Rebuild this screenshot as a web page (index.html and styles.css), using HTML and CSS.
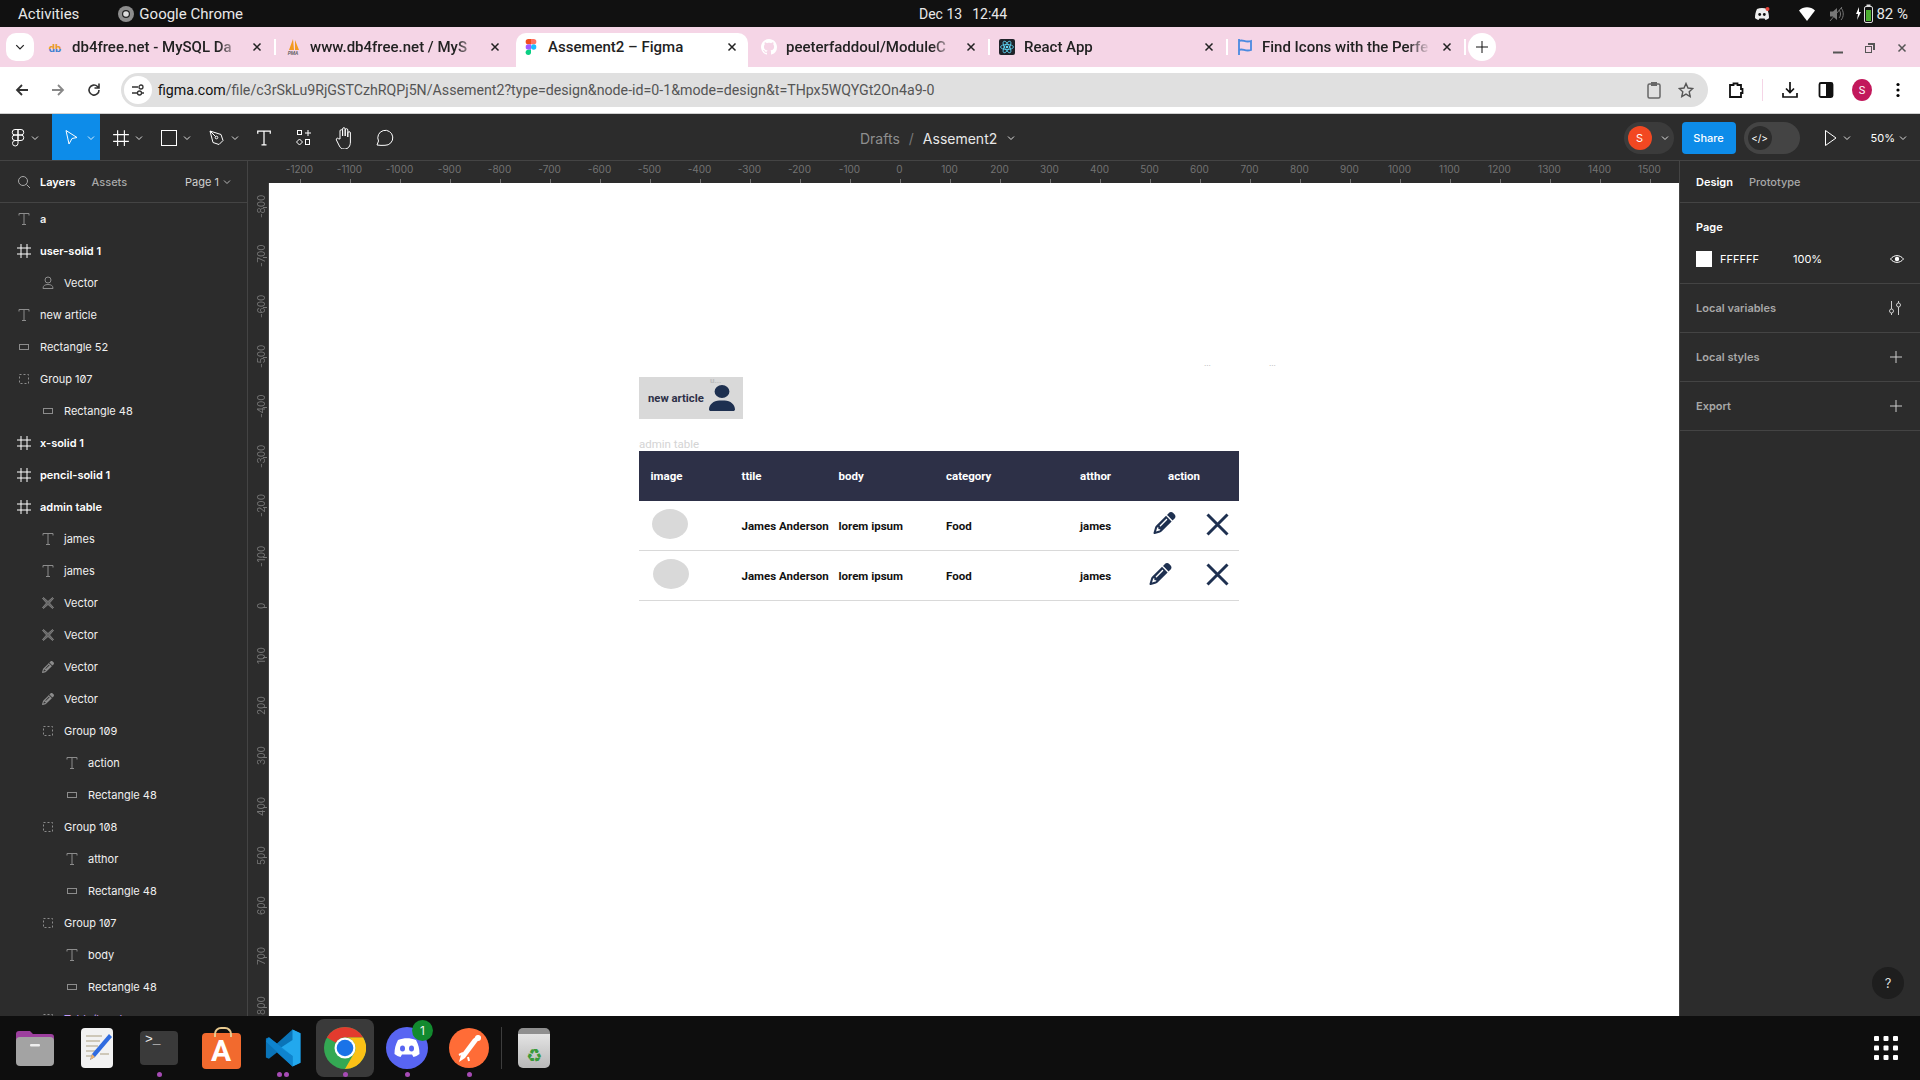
FILE: index.html
```html
<!DOCTYPE html>
<html lang="en">
<head>
    <meta charset="UTF-8">
    <title>Assement2 – Figma</title>
    <link rel="stylesheet" href="styles.css">
</head>
<body>
    <svg class="sprite" xmlns="http://www.w3.org/2000/svg">
        <linearGradient id="db-grad" x1="0" y1="0" x2="0" y2="1"><stop offset=".5" stop-color="#e79a2c"/><stop offset=".5" stop-color="#3f7fd0"/></linearGradient>
        <symbol id="i-text" viewBox="0 0 16 16"><path d="M3 4.500V2.500h10v2M8 2.500v11M6 13.500h4" fill="none" stroke="currentColor"/></symbol>
        <symbol id="i-frame" viewBox="0 0 16 16"><path d="M5 1v14M11 1v14M1 5h14M1 11h14" fill="none" stroke="currentColor"/></symbol>
        <symbol id="i-rect" viewBox="0 0 16 16"><rect x="3.500" y="5.500" width="9" height="5" fill="none" stroke="currentColor"/></symbol>
        <symbol id="i-group" viewBox="0 0 16 16"><rect x="3.500" y="3.500" width="9" height="9" fill="none" stroke="currentColor" stroke-dasharray="2 2"/></symbol>
        <symbol id="i-user" viewBox="0 0 16 16"><circle cx="8" cy="5" r="3" fill="none" stroke="currentColor"/><path d="M3 13.500c0-3 2-4 5-4s5 1 5 4z" fill="none" stroke="currentColor"/></symbol>
        <symbol id="i-x" viewBox="0 0 16 16"><path d="M3.500 2.500L8 6.500l4.500-4 1 1-4 4.500 4 4.500-1 1-4.500-4-4.500 4-1-1 4-4.500-4-4.500z" fill="#666" stroke="currentColor" stroke-width=".8"/></symbol>
        <symbol id="i-pencil" viewBox="0 0 512 512"><path fill="currentColor" d="M410.300 231l11.300-11.300-33.900-33.900-62.100-62.100L291.700 89.800l-11.300 11.300-22.600 22.600L58.600 322.900c-10.400 10.400-18 23.300-22.200 37.400L1 480.700c-2.500 8.400-.2 17.500 6.100 23.700s15.300 8.500 23.700 6.100l120.300-35.400c14.100-4.200 27-11.800 37.400-22.200L387.700 253.700 410.300 231zM160 399.400l-9.100 22.700c-4 3.100-8.500 5.400-13.300 6.900L59.400 452l23-78.100c1.400-4.900 3.800-9.400 6.900-13.300l22.700-9.100v32c0 8.800 7.200 16 16 16h32zM362.700 18.700L348.300 33.200 325.700 55.800 314.300 67.100l33.900 33.900 62.100 62.100 33.900 33.900 11.300-11.300 22.600-22.600 14.500-14.500c25-25 25-65.500 0-90.500L453.300 18.700c-25-25-65.500-25-90.500 0zm-47.400 168l-144 144c-6.200 6.200-16.400 6.200-22.600 0s-6.200-16.400 0-22.600l144-144c6.200-6.200 16.400-6.200 22.600 0s6.200 16.400 0 22.600z"/></symbol>
        <symbol id="i-chev" viewBox="0 0 8 8"><path d="M1 2.500l3 3 3-3" fill="none" stroke="currentColor"/></symbol>
        <symbol id="i-close" viewBox="0 0 12 12"><path d="M2.500 2.500l7 7M9.500 2.500l-7 7" stroke="currentColor" stroke-width="1.500"/></symbol>
        <symbol id="i-plus" viewBox="0 0 12 12"><path d="M6 0v12M0 6h12" stroke="currentColor"/></symbol>
    </svg>

    <!-- ubuntu top bar -->
    <header class="sysbar">
        <div class="sys-left">
            <span>Activities</span>
            <span class="sys-app">
                <svg width="16" height="16" viewBox="0 0 16 16"><circle cx="8" cy="8" r="8" fill="#8d8d8d"/><circle cx="8" cy="8" r="4" fill="#222"/><circle cx="8" cy="8" r="2.800" fill="#ddd"/></svg>
                Google Chrome
            </span>
        </div>
        <div class="sys-clock"><span>Dec 13</span><span>12:44</span></div>
        <div class="sys-tray">
            <svg class="tray-discord" width="16" height="14" viewBox="0 0 16 14"><path fill="#eee" d="M3 2c3-1.500 7-1.500 10 0 1.500 3 2 6 2 9-1 1-2.500 1.700-3.500 2l-1-1.500h-5L4.500 13C3.500 12.700 2 12 1 11c0-3 .5-6 2-9z"/><circle cx="5.700" cy="7.500" r="1.400" fill="#111"/><circle cx="10.300" cy="7.500" r="1.400" fill="#111"/><circle cx="13.500" cy="2" r="2" fill="#e5443a"/></svg>
            <svg class="tray-wifi" width="16" height="14" viewBox="0 0 16 14"><path fill="#fff" d="M0 3.500C4.500-.8 11.500-.8 16 3.500L8 14z"/></svg>
            <svg class="tray-vol" width="15" height="16" viewBox="0 0 15 16"><path fill="#777" d="M1 5.500h3L8 2v12l-4-3.500H1z"/><path d="M10 4c2 2 2 6 0 8M12 2c3 3 3 9 0 12M1 15L13 1" fill="none" stroke="#777"/></svg>
            <svg class="tray-bat" width="18" height="20" viewBox="0 0 18 20"><path fill="#fff" d="M4 3L1 10h2l-1 6 4-8H4z"/><rect x="9.500" y="2.500" width="8" height="16" rx="1.500" fill="none" stroke="#ddd"/><rect x="11.500" y="0.500" width="4" height="2" fill="#ddd"/><rect x="11" y="6" width="5" height="11" fill="#4caf30"/></svg>
            <span>82 %</span>
        </div>
    </header>

    <!-- chrome tabs -->
    <div class="tabstrip">
        <button class="tab-list"><svg width="10" height="10"><use href="#i-chev"/></svg></button>
        <div class="tab sep">
            <svg class="favicon" viewBox="0 0 16 16"><text x="8" y="13" class="fav-db" fill="url(#db-grad)">db</text></svg>
            <span class="tab-title">db4free.net - MySQL Da</span>
            <svg class="tab-close"><use href="#i-close"/></svg>
        </div>
        <div class="tab">
            <svg class="favicon" viewBox="0 0 16 16"><path fill="#f29a1f" d="M8 0l1 11H4zM10 1l4 10h-4z"/><text x="8" y="16" class="fav-pma" fill="#666">PMA</text></svg>
            <span class="tab-title">www.db4free.net / MyS</span>
            <svg class="tab-close"><use href="#i-close"/></svg>
        </div>
        <div class="tab active">
            <svg class="favicon" viewBox="0 0 12 18"><path fill="#f24e1e" d="M0 3a3 3 0 013-3h3v6H3a3 3 0 01-3-3z"/><path fill="#ff7262" d="M6 0h3a3 3 0 010 6H6z"/><path fill="#a259ff" d="M0 9a3 3 0 013-3h3v6H3a3 3 0 01-3-3z"/><circle cx="9" cy="9" r="3" fill="#1abcfe"/><path fill="#0acf83" d="M0 15a3 3 0 013-3h3v3a3 3 0 01-6 0z"/></svg>
            <span class="tab-title">Assement2 – Figma</span>
            <svg class="tab-close"><use href="#i-close"/></svg>
        </div>
        <div class="tab sep">
            <svg class="favicon" viewBox="0 0 16 16"><path fill="#fff" d="M8 0C3.580 0 0 3.580 0 8c0 3.540 2.290 6.530 5.470 7.590.4.070.55-.17.55-.38 0-.19-.01-.82-.01-1.490-2.010.37-2.530-.49-2.690-.94-.09-.23-.48-.94-.82-1.130-.28-.15-.68-.52-.01-.53.630-.01 1.080.58 1.230.82.720 1.210 1.870.870 2.330.66.070-.52.280-.87.510-1.070-1.780-.2-3.640-.89-3.640-3.950 0-.87.310-1.590.82-2.150-.08-.2-.36-1.020.08-2.120 0 0 .67-.21 2.200.82.640-.18 1.320-.27 2-.27s1.360.09 2 .27c1.530-1.040 2.200-.82 2.200-.82.44 1.100.16 1.920.08 2.120.51.560.82 1.270.82 2.150 0 3.070-1.870 3.750-3.650 3.950.29.250.54.730.54 1.480 0 1.070-.01 1.930-.01 2.200 0 .21.15.46.55.38A8.010 8.010 0 0016 8c0-4.420-3.580-8-8-8z"/></svg>
            <span class="tab-title">peeterfaddoul/ModuleC</span>
            <svg class="tab-close"><use href="#i-close"/></svg>
        </div>
        <div class="tab sep">
            <svg class="favicon" viewBox="0 0 16 16"><rect width="16" height="16" rx="2" fill="#20232a"/><g fill="none" stroke="#61dafb" stroke-width=".8"><ellipse cx="8" cy="8" rx="6.500" ry="2.500"/><ellipse cx="8" cy="8" rx="6.500" ry="2.500" transform="rotate(60 8 8)"/><ellipse cx="8" cy="8" rx="6.500" ry="2.500" transform="rotate(120 8 8)"/></g><circle cx="8" cy="8" r="1.300" fill="#61dafb"/></svg>
            <span class="tab-title">React App</span>
            <svg class="tab-close"><use href="#i-close"/></svg>
        </div>
        <div class="tab sep">
            <svg class="favicon" viewBox="0 0 16 16"><path d="M2 0v16M2 2c4-2 6 2 12 0v9c-6 2-8-2-12 0" fill="none" stroke="#4a8ae0" stroke-width="1.800"/></svg>
            <span class="tab-title">Find Icons with the Perfe</span>
            <svg class="tab-close"><use href="#i-close"/></svg>
        </div>
        <button class="tab-new"><svg width="12" height="12"><use href="#i-plus"/></svg></button>
        <div class="window-ctrl">
            <svg width="12" height="12" viewBox="0 0 12 12"><path d="M1 10.500h10" stroke="#555" stroke-width="2"/></svg>
            <svg width="12" height="12" viewBox="0 0 12 12"><path d="M4 1h7v7H9V3H4z" fill="#555"/><rect x="1.500" y="4.500" width="6" height="6" fill="none" stroke="#555"/></svg>
            <svg width="12" height="12"><use href="#i-close"/></svg>
        </div>
    </div>

    <!-- address bar -->
    <div class="addressbar">
        <div class="nav-btn"><svg width="16" height="16" viewBox="0 0 16 16"><path d="M14 8H3M8 3L3 8l5 5" fill="none" stroke="#333" stroke-width="1.800"/></svg></div>
        <div class="nav-btn"><svg width="16" height="16" viewBox="0 0 16 16"><path d="M2 8h11M8 3l5 5-5 5" fill="none" stroke="#888" stroke-width="1.800"/></svg></div>
        <div class="nav-btn"><svg width="16" height="16" viewBox="0 0 16 16"><path d="M13 8a5 5 0 11-1.500-3.500L13 6M13 1.500V6H8.500" fill="none" stroke="#333" stroke-width="1.600"/></svg></div>
        <div class="urlbar">
            <span class="site-info"><svg width="14" height="14" viewBox="0 0 14 14"><path d="M1 4h6M11 10h2M1 10h5" stroke="#333" stroke-width="1.300"/><circle cx="10" cy="4" r="2" fill="none" stroke="#333" stroke-width="1.300"/><circle cx="8.500" cy="10" r="2" fill="none" stroke="#333" stroke-width="1.300"/></svg></span>
            <span class="url"><b>figma.com</b>/file/c3rSkLu9RjGSTCzhRQPj5N/Assement2?type=design&amp;node-id=0-1&amp;mode=design&amp;t=THpx5WQYGt2On4a9-0</span>
            <svg class="url-icon" width="16" height="18" viewBox="0 0 16 18"><rect x="2" y="3" width="12" height="14" rx="1.500" fill="none" stroke="#666" stroke-width="1.500"/><rect x="5" y="1" width="6" height="4" fill="#666"/></svg>
            <svg class="url-icon" width="16" height="16" viewBox="0 0 16 16"><path d="M8 1.500l2 4.500 4.800.5-3.600 3.200 1 4.800L8 12.100l-4.200 2.400 1-4.800L1.200 6.500 6 6z" fill="none" stroke="#555" stroke-width="1.400"/></svg>
        </div>
        <div class="browser-icons">
            <div class="nav-btn"><svg width="18" height="18" viewBox="0 0 18 18"><path d="M3 4h3.500V2.500h4V4H14v4h1.500v4H14v4H3z" fill="none" stroke="#111" stroke-width="1.800"/></svg></div>
            <span class="bar-sep"></span>
            <div class="nav-btn"><svg width="18" height="18" viewBox="0 0 18 18"><path d="M9 1v10M5 7.500l4 4 4-4M2 12v4h14v-4" fill="none" stroke="#111" stroke-width="1.700"/></svg></div>
            <div class="nav-btn"><svg width="16" height="18" viewBox="0 0 16 18"><rect x="1.500" y="2" width="13" height="14" rx="1.500" fill="#fff" stroke="#111" stroke-width="1.800"/><rect x="8" y="2" width="7" height="14" fill="#111"/></svg></div>
            <div class="nav-btn"><span class="chrome-avatar">S</span></div>
            <div class="nav-btn"><svg width="4" height="16" viewBox="0 0 4 16"><circle cx="2" cy="2.500" r="1.600"/><circle cx="2" cy="8" r="1.600"/><circle cx="2" cy="13.500" r="1.600"/></svg></div>
        </div>
    </div>

    <!-- figma toolbar -->
    <div class="toolbar">
        <div class="tool tool-logo">
            <svg width="14" height="18" viewBox="0 0 12 18"><path d="M6 .5H3a2.750 2.750 0 000 5.500h3zM6 .5h3A2.750 2.750 0 019 6H6zM6 6H3a2.750 2.750 0 000 5.500h3zM6 11.500H3A2.750 2.750 0 106 14.250zM6 6h3a2.750 2.750 0 010 5.500H6z" fill="none" stroke="#fff"/></svg>
            <svg class="chev"><use href="#i-chev"/></svg>
        </div>
        <div class="tool tool-active">
            <svg width="18" height="18" viewBox="0 0 18 18"><path d="M3 1.500l11 7-5 1-3 5.500z" fill="none" stroke="#fff"/></svg>
            <svg class="chev"><use href="#i-chev"/></svg>
        </div>
        <div class="tool">
            <svg width="18" height="18"><use href="#i-frame"/></svg>
            <svg class="chev"><use href="#i-chev"/></svg>
        </div>
        <div class="tool">
            <svg width="18" height="18" viewBox="0 0 18 18"><rect x="1.500" y="1.500" width="15" height="15" fill="none" stroke="#fff"/></svg>
            <svg class="chev"><use href="#i-chev"/></svg>
        </div>
        <div class="tool">
            <svg width="18" height="18" viewBox="0 0 18 18"><path d="M2 2l11 3.500 2 6-4 4-6-2zM2 2l5.500 5.500" fill="none" stroke="#fff"/><circle cx="8.500" cy="8.500" r="1.300" fill="none" stroke="#fff"/></svg>
            <svg class="chev"><use href="#i-chev"/></svg>
        </div>
        <div class="tool-plain"><svg width="20" height="20"><use href="#i-text"/></svg></div>
        <div class="tool-plain"><svg width="18" height="18" viewBox="0 0 18 18"><path d="M13 1v6M10 4h6" stroke="#fff"/><rect x="2.500" y="1.500" width="4" height="4" fill="none" stroke="#fff"/><path d="M4.500 10l3 3-3 3-3-3z" fill="none" stroke="#fff"/><rect x="10.500" y="10.500" width="4" height="5" fill="none" stroke="#fff"/></svg></div>
        <div class="tool-plain"><svg width="20" height="22" viewBox="0 0 20 22"><path d="M6 12V4a1.300 1.300 0 012.600 0v5-7a1.300 1.300 0 012.600 0v7-6a1.300 1.300 0 012.600 0v7-4a1.300 1.300 0 012.600 0v9c0 4-2 7-6 7-3 0-4-1-5-3l-3-6c-.7-1.500 1.200-2.500 2-1.300z" fill="none" stroke="#fff"/></svg></div>
        <div class="tool-plain"><svg width="20" height="20" viewBox="0 0 20 20"><path d="M3 17l1.500-4A7.500 7.500 0 1111 17.300c-3 .3-5 0-8-.3z" fill="none" stroke="#fff"/></svg></div>
        <div class="doc-title">
            <span class="doc-folder">Drafts</span><span class="doc-slash">/</span><span class="doc-name">Assement2</span>
            <svg class="chev"><use href="#i-chev"/></svg>
        </div>
        <div class="toolbar-right">
            <div class="user-pill"><span class="user-dot">S</span><svg class="chev"><use href="#i-chev"/></svg></div>
            <button class="share-btn">Share</button>
            <div class="dev-toggle"><span class="dev-knob">&lt;/&gt;</span></div>
            <svg class="play" width="14" height="18" viewBox="0 0 14 18"><path d="M1.500 1.500L12 9 1.500 16.500z" fill="none" stroke="#fff"/></svg>
            <svg class="chev play-chev"><use href="#i-chev"/></svg>
            <span class="zoom-level">50%</span>
            <svg class="chev"><use href="#i-chev"/></svg>
        </div>
    </div>

    <main class="workspace">
        <aside class="layers">
            <div class="panel-tabs">
                <svg width="14" height="14" viewBox="0 0 14 14" class="search"><circle cx="6" cy="6" r="4.500" fill="none" stroke="currentColor"/><path d="M9.500 9.500L13 13" stroke="currentColor"/></svg>
                <span class="panel-tab on">Layers</span>
                <span class="panel-tab">Assets</span>
                <span class="page-pick">Page 1 <svg class="chev"><use href="#i-chev"/></svg></span>
            </div>
            <ul class="layer-list">
                <li class="layer"><svg><use href="#i-text"/></svg><span class="strong">a</span></li>
                <li class="layer frame"><svg><use href="#i-frame"/></svg><span>user-solid 1</span></li>
                <li class="layer lvl1"><svg><use href="#i-user"/></svg><span>Vector</span></li>
                <li class="layer"><svg><use href="#i-text"/></svg><span>new article</span></li>
                <li class="layer"><svg><use href="#i-rect"/></svg><span>Rectangle 52</span></li>
                <li class="layer"><svg><use href="#i-group"/></svg><span>Group 107</span></li>
                <li class="layer lvl1"><svg><use href="#i-rect"/></svg><span>Rectangle 48</span></li>
                <li class="layer frame"><svg><use href="#i-frame"/></svg><span>x-solid 1</span></li>
                <li class="layer frame"><svg><use href="#i-frame"/></svg><span>pencil-solid 1</span></li>
                <li class="layer frame"><svg><use href="#i-frame"/></svg><span>admin table</span></li>
                <li class="layer lvl1"><svg><use href="#i-text"/></svg><span>james</span></li>
                <li class="layer lvl1"><svg><use href="#i-text"/></svg><span>james</span></li>
                <li class="layer lvl1"><svg><use href="#i-x"/></svg><span>Vector</span></li>
                <li class="layer lvl1"><svg><use href="#i-x"/></svg><span>Vector</span></li>
                <li class="layer lvl1"><svg class="small"><use href="#i-pencil"/></svg><span>Vector</span></li>
                <li class="layer lvl1"><svg class="small"><use href="#i-pencil"/></svg><span>Vector</span></li>
                <li class="layer lvl1"><svg><use href="#i-group"/></svg><span>Group 109</span></li>
                <li class="layer lvl2"><svg><use href="#i-text"/></svg><span>action</span></li>
                <li class="layer lvl2"><svg><use href="#i-rect"/></svg><span>Rectangle 48</span></li>
                <li class="layer lvl1"><svg><use href="#i-group"/></svg><span>Group 108</span></li>
                <li class="layer lvl2"><svg><use href="#i-text"/></svg><span>atthor</span></li>
                <li class="layer lvl2"><svg><use href="#i-rect"/></svg><span>Rectangle 48</span></li>
                <li class="layer lvl1"><svg><use href="#i-group"/></svg><span>Group 107</span></li>
                <li class="layer lvl2"><svg><use href="#i-text"/></svg><span>body</span></li>
                <li class="layer lvl2"><svg><use href="#i-rect"/></svg><span>Rectangle 48</span></li>
                <li class="layer lvl1 component"><svg><use href="#i-group"/></svg><span>Table/head</span></li>
            </ul>
        </aside>

        <section class="stage">
            <div class="ruler-top">
                <span>-1200</span><span>-1100</span><span>-1000</span><span>-900</span><span>-800</span><span>-700</span><span>-600</span><span>-500</span><span>-400</span><span>-300</span><span>-200</span><span>-100</span><span>0</span><span>100</span><span>200</span><span>300</span><span>400</span><span>500</span><span>600</span><span>700</span><span>800</span><span>900</span><span>1000</span><span>1100</span><span>1200</span><span>1300</span><span>1400</span><span>1500</span>
            </div>
            <div class="stage-body">
                <div class="ruler-side">
                    <span>-800</span><span>-700</span><span>-600</span><span>-500</span><span>-400</span><span>-300</span><span>-200</span><span>-100</span><span>0</span><span>100</span><span>200</span><span>300</span><span>400</span><span>500</span><span>600</span><span>700</span><span>800</span>
                </div>
                <div class="canvas">
                    <span class="tiny-label dots-a">...</span>
                    <span class="tiny-label dots-b">...</span>
                    <div class="new-article">
                        <span class="tiny-label user-label">u...</span>
                        <span>new article</span>
                        <svg class="user-icon" viewBox="0 0 448 512" preserveAspectRatio="none"><path fill="#1e3050" d="M224 256A128 128 0 1 0 224 0a128 128 0 1 0 0 256zm-45.700 48C79.800 304 0 383.800 0 482.300C0 498.700 13.300 512 29.700 512H418.300c16.400 0 29.700-13.300 29.700-29.700C448 383.800 368.200 304 269.700 304H178.300z"/></svg>
                    </div>
                    <span class="frame-name">admin table</span>
                    <div class="admin-table">
                        <div class="table-head">
                            <span>image</span><span>ttile</span><span>body</span><span>category</span><span>atthor</span><span>action</span>
                        </div>
                        <div class="table-row">
                            <span class="thumb"></span><span>James Anderson</span><span>lorem ipsum</span><span>Food</span><span>james</span>
                            <div class="row-actions">
                                <svg class="act-pencil"><use href="#i-pencil"/></svg>
                                <svg class="act-x" viewBox="0 0 23 23"><path d="M1.500 1.500l20 20M21.500 1.500l-20 20" stroke="#1e3050" stroke-width="3"/></svg>
                            </div>
                        </div>
                        <div class="table-row row-two">
                            <span class="thumb"></span><span>James Anderson</span><span>lorem ipsum</span><span>Food</span><span>james</span>
                            <div class="row-actions">
                                <svg class="act-pencil"><use href="#i-pencil"/></svg>
                                <svg class="act-x" viewBox="0 0 23 23"><path d="M1.500 1.500l20 20M21.500 1.500l-20 20" stroke="#1e3050" stroke-width="3"/></svg>
                            </div>
                        </div>
                    </div>
                </div>
            </div>
        </section>

        <aside class="props">
            <div class="panel-tabs props-tabs">
                <span class="panel-tab on">Design</span>
                <span class="panel-tab">Prototype</span>
            </div>
            <div class="prop-page">
                <h3>Page</h3>
                <div class="page-fill">
                    <span class="swatch"></span>
                    <span class="fill-hex">FFFFFF</span>
                    <span class="fill-pct">100%</span>
                    <svg width="14" height="14" viewBox="0 0 14 14"><path d="M.5 7C4 2.500 10 2.500 13.500 7 10 11.500 4 11.500.5 7z" fill="none" stroke="#fff"/><circle cx="7" cy="7" r="2.200" fill="#fff"/></svg>
                </div>
            </div>
            <div class="prop-row">
                <span>Local variables</span>
                <svg width="14" height="16" viewBox="0 0 14 16"><path d="M3.500 1v8M3.500 13v2M10.500 1v2M10.500 7v8" stroke="#ccc"/><circle cx="3.500" cy="11" r="2" fill="none" stroke="#ccc"/><circle cx="10.500" cy="5" r="2" fill="none" stroke="#ccc"/></svg>
            </div>
            <div class="prop-row"><span>Local styles</span><svg width="12" height="12"><use href="#i-plus"/></svg></div>
            <div class="prop-row"><span>Export</span><svg width="12" height="12"><use href="#i-plus"/></svg></div>
            <div class="help-btn">?</div>
        </aside>
    </main>

    <!-- ubuntu dock -->
    <footer class="dock">
        <div class="dock-item">
            <svg width="40" height="38" viewBox="0 0 40 38"><path d="M1 5a3 3 0 013-3h11l3 3h18a3 3 0 013 3v6H1z" fill="#9c3f9e"/><rect x="1" y="8" width="38" height="29" rx="4" fill="#a3a3a3"/><rect x="15" y="15" width="10" height="2.500" rx="1" fill="#eee"/></svg>
        </div>
        <div class="dock-item">
            <svg width="34" height="42" viewBox="0 0 34 42"><rect x="1" y="1" width="32" height="40" rx="4" fill="#f2f2f2"/><path d="M6 9h16M6 14h14M6 19h12M6 24h10M20 27h9M6 29h6" stroke="#c2bba6" stroke-width="1.500"/><path d="M29 7l3 3-17 20-5 3 2-6z" fill="#2f6be0"/><path d="M12 27l3 3-5 3z" fill="#eeb26a"/></svg>
        </div>
        <div class="dock-item">
            <div class="term-icon">&gt;_</div>
        </div>
        <div class="dock-item">
            <div class="store-icon">A</div>
        </div>
        <div class="dock-item">
            <svg width="38" height="38" viewBox="0 0 100 100"><path d="M96 11L75 1 34 38 13 22l-8 3v50l8 3 21-16 41 37 21-10z" fill="#0a74b8"/><path d="M75 1l21 10v78l-21 10V71L43 50 75 29z" fill="#22a8ee"/><path d="M13 22l62 49v28L5 33z" fill="#0e86d0" opacity=".9"/></svg>
        </div>
        <div class="dock-item dock-current">
            <svg width="42" height="42" viewBox="0 0 42 42"><circle cx="21" cy="21" r="21" fill="#34a853"/><path d="M21 0a21 21 0 0118.200 10.500H21a10.500 10.500 0 00-9.100 5.250L2.800 10.500A21 21 0 0121 0z" fill="#e33b2e"/><path d="M39.200 10.500A21 21 0 0121 42l9.100-15.750A10.500 10.500 0 0021 10.500z" fill="#fbc116"/><circle cx="21" cy="21" r="10.500" fill="#fff"/><circle cx="21" cy="21" r="8.300" fill="#1a73e8"/></svg>
        </div>
        <div class="dock-item">
            <svg width="42" height="42" viewBox="0 0 42 42"><circle cx="21" cy="21" r="21" fill="#5865f2"/><path d="M12 13c6-2.500 12-2.500 18 0 2.500 4.500 3.500 9 3.500 14-2 1.500-4 2.500-6 3l-1.500-2.500h-10L14.500 30c-2-.5-4-1.500-6-3 0-5 1-9.500 3.500-14z" fill="#fff"/><ellipse cx="16.500" cy="21.500" rx="2.500" ry="3" fill="#5865f2"/><ellipse cx="25.500" cy="21.500" rx="2.500" ry="3" fill="#5865f2"/></svg>
            <span class="dock-badge">1</span>
        </div>
        <div class="dock-item">
            <svg width="40" height="42" viewBox="0 0 40 42"><circle cx="20" cy="21" r="20" fill="#ff6c37"/><path d="M29 8l3 2-4 5-12 16-6 4 2-7 12-16z" fill="#fff"/><circle cx="29" cy="11" r="3" fill="#fff"/><path d="M14 26l-4 2M19 30l1 4" stroke="#fff" stroke-width="2"/></svg>
        </div>
        <span class="dock-sep"></span>
        <div class="dock-item trash-item">
            <div class="trash-icon"><span>♻</span></div>
        </div>
        <svg class="app-grid" width="24" height="24" viewBox="0 0 24 24" fill="#fff">
            <rect width="5" height="5" rx="1"/><rect x="9.500" width="5" height="5" rx="1"/><rect x="19" width="5" height="5" rx="1"/>
            <rect y="9.500" width="5" height="5" rx="1"/><rect x="9.500" y="9.500" width="5" height="5" rx="1"/><rect x="19" y="9.500" width="5" height="5" rx="1"/>
            <rect y="19" width="5" height="5" rx="1"/><rect x="9.500" y="19" width="5" height="5" rx="1"/><rect x="19" y="19" width="5" height="5" rx="1"/>
        </svg>
    </footer>
</body>
</html>
```

FILE: styles.css
```css
:root {
    --chrome-font: 'Roboto', 'Liberation Sans', sans-serif;
    --figma-font: 'Inter', 'Liberation Sans', sans-serif;
    --panel-bg: #2c2c2c;
    --panel-line: #444444;
    --panel-muted: #a8a8a8;
    --ruler-text: #737373;
    --tab-pink: #f5d5e6;
    --navy: #2d3047;
    --icon-navy: #1e3050;
    --dock-bg: #0e0e0e;
}

* {
    box-sizing: border-box;
}

html, body {
    margin: 0;
    padding: 0;
}

body {
    width: 1920px;
    height: 1080px;
    overflow: hidden;
    display: flex;
    flex-direction: column;
    background-color: var(--panel-bg);
    font-family: var(--figma-font);
}

.sprite {
    position: absolute;
    width: 0;
    height: 0;
}

/* system bar */
.sysbar {
    height: 27px;
    flex: none;
    display: grid;
    grid-template-columns: 1fr auto 1fr;
    align-items: center;
    padding: 0 12px 0 18px;
    background-color: #111111;
    color: #e8e8e8;
    font-family: var(--chrome-font);
    font-size: 14px;
}

.sys-left {
    display: flex;
    align-items: center;
    gap: 39px;
    font-size: 15px;
}

.sys-app {
    display: flex;
    align-items: center;
    gap: 5px;
}

.sys-clock {
    display: flex;
    gap: 10px;
}

.sys-tray {
    display: flex;
    align-items: center;
    justify-content: flex-end;
    font-size: 15px;
}

.tray-discord {
    margin-right: 29px;
}

.tray-wifi {
    margin-right: 14px;
}

.tray-vol {
    margin-right: 11px;
}

.tray-bat {
    margin-right: 3px;
}

/* tabs */
.tabstrip {
    height: 40px;
    flex: none;
    display: flex;
    align-items: flex-end;
    padding-left: 37px;
    position: relative;
    background-color: var(--tab-pink);
    font-family: var(--chrome-font);
    color: #222;
}

.tab-list {
    position: absolute;
    left: 6px;
    top: 6px;
    width: 28px;
    height: 28px;
    border: none;
    padding: 0;
    border-radius: 10px;
    background-color: #fff;
    color: #222;
    display: flex;
    align-items: center;
    justify-content: center;
}

.tab {
    width: 238px;
    height: 34px;
    flex: none;
    display: flex;
    align-items: center;
    gap: 9px;
    padding: 0 12px 6px 10px;
    position: relative;
    font-size: 15px;
    font-weight: 500;
}

.tab.sep::after {
    content: "";
    position: absolute;
    right: -1px;
    top: 6px;
    bottom: 12px;
    width: 2px;
    background-color: #fff;
}

.tab.active {
    width: 232px;
    margin: 0 3px;
    padding-left: 7px;
    padding-right: 10px;
    border-radius: 10px 10px 0 0;
    background-color: #fff;
}

.tab-title {
    flex: 1;
    min-width: 0;
    white-space: nowrap;
    overflow: hidden;
    -webkit-mask-image: linear-gradient(to right, #000 86%, transparent 99%);
    mask-image: linear-gradient(to right, #000 86%, transparent 99%);
}

.tab.active .tab-title {
    -webkit-mask-image: none;
    mask-image: none;
}

.favicon {
    width: 16px;
    height: 16px;
    flex: none;
}

.fav-db {
    font: bold 11px var(--chrome-font);
    text-anchor: middle;
}

.fav-pma {
    font: italic bold 5px var(--chrome-font);
    text-anchor: middle;
}

.tab-close {
    width: 12px;
    height: 12px;
    flex: none;
}

.tab-new {
    width: 28px;
    height: 28px;
    margin: 0 0 6px 3px;
    padding: 0;
    border: none;
    border-radius: 50%;
    background-color: #fff;
    color: #111;
    display: flex;
    align-items: center;
    justify-content: center;
}

.window-ctrl {
    margin-left: auto;
    margin-right: 12px;
    margin-bottom: 13px;
    display: flex;
    gap: 20px;
    color: #555;
}

/* address bar */
.addressbar {
    height: 47px;
    flex: none;
    display: flex;
    align-items: center;
    padding-left: 4px;
    background-color: #fff;
    border-bottom: 1px solid #d0d0d0;
    font-family: var(--chrome-font);
}

.nav-btn {
    width: 36px;
    height: 34px;
    flex: none;
    display: flex;
    align-items: center;
    justify-content: center;
}

.urlbar {
    width: 1587px;
    height: 34px;
    margin-left: 9px;
    padding: 0 14px 0 3px;
    display: flex;
    align-items: center;
    border-radius: 17px;
    background-color: #e0e0e0;
}

.site-info {
    width: 28px;
    height: 28px;
    flex: none;
    border-radius: 50%;
    background-color: #fff;
    display: flex;
    align-items: center;
    justify-content: center;
}

.url {
    flex: 1;
    margin-left: 6px;
    font-size: 14.200px;
    color: #555;
    white-space: nowrap;
}

.url b {
    font-weight: 400;
    color: #111;
}

.url-icon {
    margin-left: 16px;
}

.browser-icons {
    display: flex;
    align-items: center;
    margin-left: 10px;
}

.bar-sep {
    width: 1px;
    height: 22px;
    margin: 0 9px 0 8px;
    background-color: var(--tab-pink);
}

.chrome-avatar {
    width: 20px;
    height: 22px;
    border-radius: 50%;
    background-color: #c2185b;
    color: #fff;
    font-size: 11px;
    display: flex;
    align-items: center;
    justify-content: center;
}

/* figma toolbar */
.toolbar {
    height: 47px;
    flex: none;
    display: flex;
    align-items: stretch;
    background-color: var(--panel-bg);
    border-bottom: 1px solid var(--panel-line);
    color: #fff;
}

.tool,
.tool-plain,
.doc-title,
.toolbar-right {
    padding-top: 2px;
}

.tool {
    width: 48px;
    flex: none;
    padding-left: 12px;
    display: flex;
    align-items: center;
    gap: 5px;
}

.tool-logo {
    width: 52px;
    padding-left: 11px;
    gap: 6px;
}

.tool-active {
    padding-left: 11px;
    gap: 6px;
    background-color: #0d8ce9;
}

.tool-plain {
    width: 40px;
    flex: none;
    display: flex;
    align-items: center;
    justify-content: center;
}

.chev {
    width: 8px;
    height: 8px;
    flex: none;
    opacity: 0.85;
}

.doc-title {
    margin-left: 456px;
    display: flex;
    align-items: center;
    font-size: 14px;
}

.doc-folder {
    color: #8f8f8f;
}

.doc-slash {
    margin: 0 9px;
    color: #777;
}

.doc-name {
    margin-right: 10px;
    color: #e8e8e8;
}

.toolbar-right {
    margin-left: auto;
    padding-right: 13px;
    display: flex;
    align-items: center;
    font-size: 12px;
}

.user-pill {
    width: 50px;
    height: 32px;
    padding: 0 5px 0 4px;
    border-radius: 16px;
    background-color: #3b3b3b;
    display: flex;
    align-items: center;
    justify-content: space-between;
}

.user-dot {
    width: 24px;
    height: 24px;
    border-radius: 50%;
    background-color: #f24822;
    font-size: 11px;
    display: flex;
    align-items: center;
    justify-content: center;
}

.share-btn {
    width: 54px;
    height: 32px;
    margin-left: 8px;
    border: none;
    border-radius: 4px;
    background-color: #0d8ce9;
    color: #fff;
    font: 500 11px var(--figma-font);
}

.dev-toggle {
    width: 56px;
    height: 32px;
    margin-left: 8px;
    padding: 4px;
    border-radius: 16px;
    background-color: #444;
}

.dev-knob {
    width: 24px;
    height: 24px;
    border-radius: 50%;
    background-color: #2c2c2c;
    font-size: 10px;
    display: flex;
    align-items: center;
    justify-content: center;
}

.play {
    margin-left: 24px;
}

.play-chev {
    margin-left: 5px;
}

.zoom-level {
    margin: 0 4px 0 20px;
    font-size: 11px;
}

/* main area */
.workspace {
    flex: 1;
    min-height: 0;
    display: flex;
}

.layers {
    width: 248px;
    flex: none;
    overflow: hidden;
    border-right: 1px solid var(--panel-line);
    color: #f0f0f0;
    font-size: 11px;
}

.panel-tabs {
    height: 42px;
    display: flex;
    align-items: center;
    border-bottom: 1px solid var(--panel-line);
    padding: 0 16px 0 17px;
    color: var(--panel-muted);
}

.search {
    margin-right: 9px;
}

.panel-tab {
    margin-right: 16px;
    font-size: 11px;
    font-weight: 500;
}

.panel-tab.on {
    color: #fff;
    font-weight: 600;
}

.page-pick {
    margin-left: auto;
    display: flex;
    align-items: center;
    gap: 4px;
    color: #d0d0d0;
    font-size: 11px;
}

.layer-list {
    margin: 0;
    padding: 0;
    list-style: none;
    font-feature-settings: "zero";
}

.layer {
    height: 32px;
    padding-left: 16px;
    display: flex;
    align-items: center;
    gap: 8px;
    white-space: nowrap;
}

.layer svg {
    width: 16px;
    height: 16px;
    flex: none;
    color: #8c8c8c;
}

.layer svg.small {
    width: 12px;
    height: 12px;
    margin: 0 2px;
}

.layer.frame {
    font-weight: 600;
    color: #fff;
}

.layer.frame svg {
    color: #fff;
}

.strong {
    font-weight: 600;
}

.lvl1 {
    padding-left: 40px;
}

.lvl2 {
    padding-left: 64px;
}

.component {
    color: #c69cf5;
}

/* rulers and canvas */
.stage {
    flex: 1;
    min-width: 0;
    display: flex;
    flex-direction: column;
}

.ruler-top {
    height: 22px;
    flex: none;
    padding-left: 26.500px;
    display: flex;
    background-color: var(--panel-bg);
    color: var(--ruler-text);
    font-size: 10px;
}

.ruler-top span {
    width: 50px;
    flex: none;
    padding-top: 2px;
    text-align: center;
    position: relative;
}

.ruler-top span::after {
    content: "";
    position: absolute;
    left: 25px;
    bottom: 0;
    width: 1px;
    height: 4px;
    background-color: #777;
}

.stage-body {
    flex: 1;
    min-height: 0;
    display: flex;
}

.ruler-side {
    width: 21px;
    flex: none;
    overflow: hidden;
    border-right: 1px solid var(--panel-line);
    color: var(--ruler-text);
    font-size: 10px;
}

.ruler-side span {
    height: 50px;
    padding: 4px 7px 0 0;
    display: flex;
    align-items: center;
    justify-content: center;
    position: relative;
    writing-mode: vertical-rl;
    transform: rotate(180deg);
}

.ruler-side span::after {
    content: "";
    position: absolute;
    left: 0;
    top: 25px;
    width: 4px;
    height: 1px;
    background-color: #777;
}

.canvas {
    flex: 1;
    position: relative;
    background-color: #fff;
}

.new-article {
    position: absolute;
    left: 370px;
    top: 194px;
    width: 104px;
    height: 42px;
    padding-left: 9px;
    display: flex;
    align-items: center;
    gap: 5px;
    background-color: #d9d9d9;
    color: var(--navy);
    font: 700 11.300px var(--chrome-font);
}

.user-icon {
    width: 26px;
    height: 26px;
}

.tiny-label {
    position: absolute;
    color: #bdbdbd;
    font-size: 8px;
    line-height: 8px;
}

.user-label {
    left: 71px;
    top: 0;
}

.dots-a {
    left: 935px;
    top: 176px;
}

.dots-b {
    left: 1000px;
    top: 176px;
}

.frame-name {
    position: absolute;
    left: 370px;
    top: 254px;
    color: #d4d4d4;
    font: 11.500px/14px var(--chrome-font);
}

.admin-table {
    position: absolute;
    left: 369.500px;
    top: 268px;
    width: 600.500px;
    font: 700 11.500px var(--chrome-font);
}

.table-head,
.table-row {
    display: grid;
    grid-template-columns: 103px 97px 107.500px 134px 88px 71px;
    align-items: center;
}

.table-head {
    height: 50px;
    background-color: var(--navy);
    color: #fff;
}

.table-head span:first-child {
    padding-left: 12px;
}

.table-row {
    height: 50px;
    border-bottom: 1px solid #d9d9d9;
    color: #111;
}

.thumb {
    width: 36px;
    height: 30px;
    margin: -3px 0 0 13px;
    border-radius: 50%;
    background-color: #d9d9d9;
}

.row-actions {
    position: relative;
    height: 100%;
}

.act-pencil {
    position: absolute;
    left: -15px;
    top: 11px;
    width: 23px;
    height: 22px;
    color: var(--icon-navy);
}

.act-x {
    position: absolute;
    left: 38px;
    top: 12px;
    width: 23px;
    height: 23px;
}

.row-two .thumb {
    margin-left: 14px;
}

.row-two .act-pencil {
    left: -19px;
    top: 12px;
}

.row-two .act-x {
    top: 12px;
}

/* right panel */
.props {
    width: 241px;
    flex: none;
    position: relative;
    border-left: 1px solid var(--panel-line);
    color: #fff;
    font-size: 11px;
}

.props-tabs {
    padding-left: 16px;
}

.prop-page {
    height: 81px;
    padding: 15px 16px 0;
    border-bottom: 1px solid var(--panel-line);
}

.prop-page h3 {
    margin: 0 0 15px;
    font-size: 11px;
    font-weight: 600;
    line-height: 18px;
}

.page-fill {
    display: flex;
    align-items: center;
}

.swatch {
    width: 16px;
    height: 16px;
    margin-right: 8px;
    background-color: #fff;
}

.fill-hex {
    width: 73px;
}

.fill-pct {
    flex: 1;
}

.prop-row {
    height: 49px;
    padding: 0 18px 0 16px;
    display: flex;
    align-items: center;
    justify-content: space-between;
    border-bottom: 1px solid var(--panel-line);
    color: var(--panel-muted);
    font-weight: 600;
}

.prop-row svg {
    color: #ccc;
}

.help-btn {
    position: absolute;
    right: 16px;
    bottom: 17px;
    width: 32px;
    height: 32px;
    border-radius: 50%;
    background-color: #1e1e1e;
    color: #ddd;
    font-size: 13px;
    display: flex;
    align-items: center;
    justify-content: center;
}

/* dock */
.dock {
    height: 64px;
    flex: none;
    display: flex;
    align-items: center;
    padding-left: 4px;
    position: relative;
    background-color: var(--dock-bg);
}

.dock-item {
    width: 62px;
    height: 58px;
    flex: none;
    position: relative;
    display: flex;
    align-items: center;
    justify-content: center;
}

.dock-current {
    width: 58px;
    margin: 0 2px;
    border-radius: 8px;
    background-color: #3a3a3a;
}

.dock-item::after,
.dock-item:nth-child(5)::before {
    content: "";
    position: absolute;
    left: 50%;
    bottom: 0;
    width: 5px;
    height: 5px;
    margin-left: -2.500px;
    border-radius: 50%;
    background-color: #a64bb5;
}

.dock-item:nth-child(1)::after,
.dock-item:nth-child(2)::after,
.dock-item:nth-child(4)::after,
.trash-item::after {
    display: none;
}

.dock-item:nth-child(5)::after {
    margin-left: 1px;
}

.dock-item:nth-child(5)::before {
    margin-left: -6px;
}

.term-icon {
    width: 38px;
    height: 34px;
    padding: 2px 5px;
    border-radius: 4px;
    background-color: #3a3a3a;
    color: #eee;
    font: 13px/14px 'Liberation Mono', monospace;
}

.store-icon {
    width: 39px;
    height: 36px;
    margin-top: 5px;
    border-radius: 4px;
    background-color: #f26a2e;
    color: #fff;
    font: 700 30px/36px var(--chrome-font);
    text-align: center;
    position: relative;
}

.store-icon::before {
    content: "";
    position: absolute;
    left: 12px;
    top: -6px;
    width: 14px;
    height: 8px;
    border: 2px solid #e8c98e;
    border-bottom: none;
    border-radius: 7px 7px 0 0;
}

.dock-badge {
    position: absolute;
    right: 5px;
    top: 1px;
    width: 21px;
    height: 21px;
    border-radius: 50%;
    background-color: #128a2e;
    color: #e8f5e8;
    font-size: 12px;
    display: flex;
    align-items: center;
    justify-content: center;
}

.dock-sep {
    width: 1px;
    height: 42px;
    margin-left: 1px;
    background-color: #3d3d3d;
}

.trash-item {
    margin-left: 1px;
}

.trash-icon {
    width: 32px;
    height: 40px;
    border-radius: 5px;
    background: linear-gradient(#e4e4e4, #b8b8b8);
    border-top: 6px solid #8f8f8f;
    display: flex;
    align-items: flex-end;
    justify-content: center;
    color: #3a9a3a;
    font: 18px/24px 'DejaVu Sans', sans-serif;
}

.app-grid {
    position: absolute;
    right: 22px;
    top: 20px;
}
```
